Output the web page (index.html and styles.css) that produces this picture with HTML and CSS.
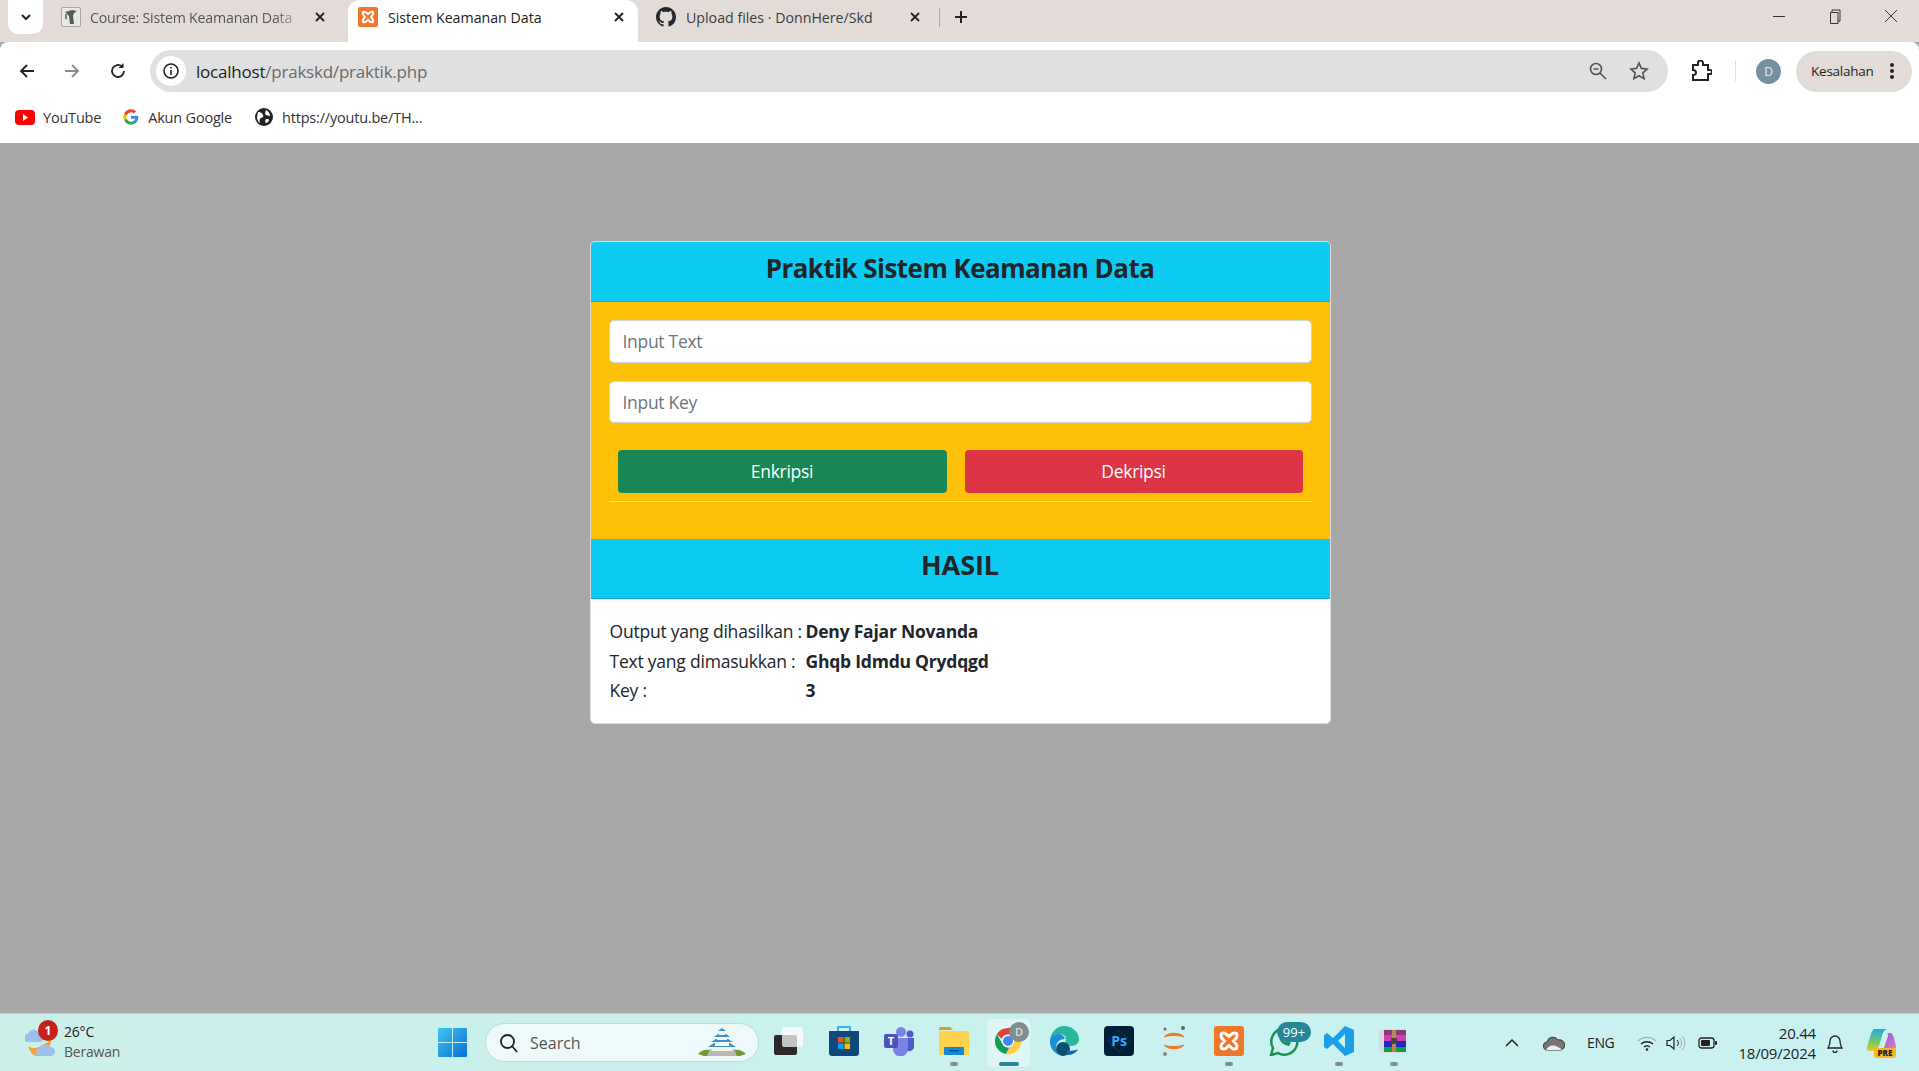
FILE: index.html
```html
<!DOCTYPE html>
<html lang="id">
<head>
<meta charset="utf-8">
<title>Sistem Keamanan Data</title>
<link rel="stylesheet" href="styles.css">
</head>
<body>
<div class="tabstrip">
  <button class="tabsearch"><svg width="14" height="14" viewBox="0 0 14 14"><path d="M3 5l4 4 4-4" fill="none" stroke="#222" stroke-width="2"/></svg></button>
  <div class="tab tab-1">
    <svg width="20" height="20" viewBox="0 0 20 20"><rect x=".5" y=".5" width="19" height="19" rx="1.500" fill="#e8e8e6" stroke="#a5a5a5"/><path d="M4 5l7-2 5 1-3 2-1 3 1 8H9L8 9 6 7z" fill="#5a5a5a"/><path d="M5 7v5" stroke="#5a5a5a" stroke-width="1.500"/></svg>
    <span class="tabtext tabtext-fade">Course: Sistem Keamanan Data</span>
    <svg class="tabclose" width="12" height="12" viewBox="0 0 12 12"><path d="M2 2l8 8M10 2l-8 8" stroke="#222" stroke-width="1.800"/></svg>
  </div>
  <div class="tab tab-active">
    <svg width="20" height="20" viewBox="0 0 20 20"><rect width="20" height="20" rx="2" fill="#f0762a"/><path d="M5 5c2-1 3 0 5 2 2-2 3-3 5-2 1 2 0 3-2 5 2 2 3 3 2 5-2 1-3 0-5-2-2 2-3 3-5 2-1-2 0-3 2-5-2-2-3-3-2-5z" fill="none" stroke="#fff" stroke-width="2"/></svg>
    <span class="tabtext">Sistem Keamanan Data</span>
    <svg class="tabclose" width="12" height="12" viewBox="0 0 12 12"><path d="M2 2l8 8M10 2l-8 8" stroke="#222" stroke-width="1.800"/></svg>
  </div>
  <div class="tab tab-3">
    <svg width="20" height="20" viewBox="0 0 16 16"><path fill="#24292f" d="M8 0C3.58 0 0 3.58 0 8c0 3.54 2.29 6.53 5.47 7.59.4.07.55-.17.55-.38 0-.19-.01-.82-.01-1.49-2.01.37-2.53-.49-2.69-.94-.09-.23-.48-.94-.82-1.13-.28-.15-.68-.52-.01-.53.63-.01 1.08.58 1.23.82.72 1.21 1.87.87 2.33.66.07-.52.28-.87.51-1.07-1.78-.2-3.64-.89-3.64-3.95 0-.87.31-1.59.82-2.15-.08-.2-.36-1.02.08-2.12 0 0 .67-.21 2.2.82.64-.18 1.32-.27 2-.27s1.36.09 2 .27c1.53-1.04 2.2-.82 2.2-.82.44 1.1.16 1.92.08 2.12.51.56.82 1.27.82 2.15 0 3.07-1.87 3.75-3.65 3.95.29.25.54.73.54 1.48 0 1.07-.01 1.93-.01 2.2 0 .21.15.46.55.38A8.01 8.01 0 0 0 16 8c0-4.42-3.58-8-8-8z"/></svg>
    <span class="tabtext">Upload files · DonnHere/Skd</span>
    <svg class="tabclose" width="12" height="12" viewBox="0 0 12 12"><path d="M2 2l8 8M10 2l-8 8" stroke="#222" stroke-width="1.800"/></svg>
  </div>
  <span class="tabdivider"></span>
  <svg class="tabplus" width="14" height="14" viewBox="0 0 14 14"><path d="M7 1v12M1 7h12" stroke="#222" stroke-width="2"/></svg>
  <div class="winbuttons">
    <svg width="14" height="14" viewBox="0 0 14 14"><path d="M1 7.500h12" stroke="#333"/></svg>
    <svg width="14" height="16" viewBox="0 0 14 16"><path d="M4 3V1h8v11h-2M2.500 3.500h7.500v11H2.500z" fill="none" stroke="#333"/></svg>
    <svg width="14" height="14" viewBox="0 0 14 14"><path d="M1 1l12 12M13 1L1 13" stroke="#333"/></svg>
  </div>
</div>

<div class="toolbar">
  <svg class="nav-back" width="18" height="18" viewBox="0 0 18 18"><path d="M16 9H3M9 3L3 9l6 6" fill="none" stroke="#222" stroke-width="1.800"/></svg>
  <svg class="nav-fwd" width="18" height="18" viewBox="0 0 18 18"><path d="M2 9h13M9 3l6 6-6 6" fill="none" stroke="#8a8a8a" stroke-width="1.800"/></svg>
  <svg class="nav-reload" width="18" height="18" viewBox="0 0 18 18"><path d="M15 9a6 6 0 1 1-2-4.500" fill="none" stroke="#222" stroke-width="1.800"/><path d="M14.500 1v5h-5z" fill="#222"/></svg>
  <div class="omnibox">
    <span class="siteinfo"><svg width="18" height="18" viewBox="0 0 18 18"><circle cx="9" cy="9" r="7" fill="none" stroke="#222" stroke-width="1.600"/><path d="M9 8v5M9 5v1.600" stroke="#222" stroke-width="1.600"/></svg></span>
    <span class="url"><span class="url-host">localhost</span>/prakskd/praktik.php</span>
    <svg class="omni-zoom" width="20" height="20" viewBox="0 0 20 20"><circle cx="8" cy="8" r="5.500" fill="none" stroke="#555" stroke-width="1.600"/><path d="M12 12l6 6M5.500 8h5" stroke="#555" stroke-width="1.600"/></svg>
    <svg class="omni-star" width="20" height="20" viewBox="0 0 20 20"><path d="M10 2l2.400 5.400 5.800.6-4.400 3.900 1.300 5.800L10 14.700l-5.100 3 1.300-5.800L1.800 8l5.800-.6z" fill="none" stroke="#555" stroke-width="1.600"/></svg>
  </div>
  <svg class="tool-ext" width="22" height="22" viewBox="0 0 22 22"><path d="M3 5h5V3a2 2 0 0 1 5 0v2h5v5h2a2 2 0 0 1 0 4h-2v6H3v-5c2 0 3-1 3-2.500S5 10 3 10z" fill="none" stroke="#222" stroke-width="2"/></svg>
  <span class="tool-divider"></span>
  <span class="avatar">D</span>
  <span class="errpill">Kesalahan<svg width="6" height="18" viewBox="0 0 6 18"><circle cx="3" cy="3" r="2" fill="#222"/><circle cx="3" cy="9" r="2" fill="#222"/><circle cx="3" cy="15" r="2" fill="#222"/></svg></span>
</div>

<div class="bookmarks">
  <span class="bm bm-1"><svg width="20" height="15" viewBox="0 0 20 15"><rect width="20" height="15" rx="4" fill="#f00"/><path d="M8 4l5 3.500L8 11z" fill="#fff"/></svg>YouTube</span>
  <span class="bm bm-2"><svg width="16" height="16" viewBox="0 0 48 48"><path fill="#4285F4" d="M46 24.500c0-1.600-.1-3.100-.4-4.500H24v9h12.400c-.5 2.800-2.100 5.200-4.600 6.800v5.700h7.400C43.500 36.500 46 31 46 24.500z"/><path fill="#34A853" d="M24 47c6.200 0 11.400-2 15.200-5.500l-7.400-5.700c-2 1.400-4.700 2.200-7.800 2.200-6 0-11-4-12.800-9.500H3.500v5.900C7.300 42 15 47 24 47z"/><path fill="#FBBC05" d="M11.200 28.500c-.5-1.400-.7-2.900-.7-4.500s.3-3.100.7-4.500v-5.900H3.500C2 16.700 1 20.200 1 24s.9 7.300 2.500 10.400z"/><path fill="#EA4335" d="M24 10c3.400 0 6.400 1.200 8.800 3.400l6.500-6.500C35.400 3.300 30.200 1 24 1 15 1 7.300 6 3.500 13.600l7.700 5.900C13 14 18 10 24 10z"/></svg>Akun Google</span>
  <span class="bm bm-3"><svg width="18" height="18" viewBox="0 0 18 18"><circle cx="9" cy="9" r="9" fill="#222"/><path d="M3 4c3 0 4 1 5 3s-1 3-2 3-2 2-1 5c-2-1-3-4-3-6zM11 2c2 1 4 3 4 6-2 0-3-1-4-1s-1-3 0-5zM11 11c2 0 3 0 3 1s-2 3-3 3-1-3 0-4z" fill="#fff"/></svg>https://youtu.be/TH...</span>
</div>

<main class="page">
  <section class="card">
    <h3 class="card-head">Praktik Sistem Keamanan Data</h3>
    <form class="card-form">
      <input class="field" type="text" placeholder="Input Text">
      <input class="field field-key" type="text" placeholder="Input Key">
      <div class="actions">
        <button type="button" class="btn btn-green">Enkripsi</button>
        <button type="button" class="btn btn-red">Dekripsi</button>
      </div>
      <hr class="rule">
    </form>
    <h3 class="card-head card-head-result">HASIL</h3>
    <div class="result">
      <span>Output yang dihasilkan :</span><b>Deny Fajar Novanda</b>
      <span>Text yang dimasukkan :</span><b>Ghqb Idmdu Qrydqgd</b>
      <span>Key :</span><b>3</b>
    </div>
  </section>
</main>

<footer class="taskbar">
  <div class="weather">
    <svg width="30" height="30" viewBox="0 0 30 30"><path d="M3 18c4 3 10 3 16-2 3-1 6-3 7-6 1 8-5 18-14 18-4 0-7-4-9-10z" fill="#f2a33a"/><path d="M2 14a4 4 0 0 1 1-8 6 6 0 0 1 11-1 4.500 4.500 0 0 1 1 9z" fill="#9dc0ea"/><path d="M15 28a4 4 0 0 1 0-8 5.500 5.500 0 0 1 10-1 4.500 4.500 0 0 1 1 9z" fill="#9dc0ea"/></svg>
    <span class="wbadge">1</span>
    <div class="wtext"><span>26°C</span><span class="wsub">Berawan</span></div>
  </div>
  <svg class="startbtn" width="29" height="29" viewBox="0 0 29 29"><defs><linearGradient id="win" x1="0" y1="0" x2="1" y2="1"><stop offset="0" stop-color="#3fc5f5"/><stop offset="1" stop-color="#0a6fd6"/></linearGradient></defs><path fill="url(#win)" d="M0 1a1 1 0 0 1 1-1h13v14H0zM15 0h13a1 1 0 0 1 1 1v13H15zM0 15h14v14H1a1 1 0 0 1-1-1zM15 15h14v13a1 1 0 0 1-1 1H15z"/></svg>
  <div class="searchbox">
    <svg width="20" height="20" viewBox="0 0 20 20"><circle cx="8.500" cy="8.500" r="6.500" fill="none" stroke="#222" stroke-width="1.800"/><path d="M13 13l5 6" stroke="#222" stroke-width="1.800"/></svg>
    <span class="searchtext">Search</span>
    <svg class="castle" width="48" height="29" viewBox="0 0 48 29"><path d="M0 26c3-4 8-5 12-4h24c5-1 9 1 12 4l-6 2H6z" fill="#6f9a3a"/><path d="M9 28l3-7h24l3 7z" fill="#b9b9b4"/><path d="M13 23h22l-2-5H15z" fill="#f3f3ee"/><path d="M10 19l6-4h16l6 4zM13 14l5-3h12l5 3zM16 9l4-3h8l4 3z" fill="#3f8fc9"/><path d="M17 15h14v3H17zM19 10h10v2H19zM21 5h6v2h-6z" fill="#f6f6f2"/><path d="M20 3l4-3 4 3z" fill="#3f8fc9"/></svg>
  </div>
  <div class="apps">
    <span class="app"><svg width="29" height="28" viewBox="0 0 29 28"><rect y="8" width="23" height="20" rx="2" fill="#2a2a2a"/><rect x="8" width="21" height="20" rx="2" fill="#fff" fill-opacity=".72"/></svg></span>
    <span class="app"><svg width="30" height="32" viewBox="0 0 30 32"><path d="M9 6V2h12v4" fill="none" stroke="#35b5e0" stroke-width="2"/><path d="M0 6h30v22a3 3 0 0 1-3 3H3a3 3 0 0 1-3-3z" fill="#12477e"/><rect x="9" y="12" width="5.500" height="5.500" fill="#f25022"/><rect x="15.500" y="12" width="5.500" height="5.500" fill="#7fba00"/><rect x="9" y="18.500" width="5.500" height="5.500" fill="#00a4ef"/><rect x="15.500" y="18.500" width="5.500" height="5.500" fill="#ffb900"/></svg></span>
    <span class="app"><svg width="30" height="30" viewBox="0 0 30 30"><circle cx="17" cy="6" r="5" fill="#7b83eb"/><circle cx="26" cy="8" r="3.500" fill="#5059c9"/><path d="M21 12h9v9a5 5 0 0 1-9 2z" fill="#5059c9"/><path d="M9 12h15v11a7.500 7.500 0 0 1-15 0z" fill="#7b83eb"/><rect y="8" width="14" height="14" rx="2" fill="#4b53bc"/><text class="teams-t" x="7" y="19" text-anchor="middle">T</text></svg></span>
    <span class="app app-run"><svg width="30" height="30" viewBox="0 0 30 30"><path d="M0 3a2 2 0 0 1 2-2h9l3 3h-14z" fill="#d9a21e"/><path d="M0 5h30v23a1 1 0 0 1-1 1H1a1 1 0 0 1-1-1z" fill="#ffd34e"/><rect x="5" y="21" width="20" height="8" rx="1" fill="#1486d6"/><rect x="10" y="24" width="10" height="1.500" fill="#0b4f8a"/></svg></span>
    <span class="app app-active"><svg width="30" height="30" viewBox="0 0 48 48"><path fill="#db4437" d="M24 3a21 21 0 0 1 18.200 10.500H24a10.500 10.500 0 0 0-10 7.300L6.100 13.200A21 21 0 0 1 24 3z"/><path fill="#0f9d58" d="M6.100 13.200L15 28.500A10.500 10.500 0 0 0 26.300 34.300L20.700 44.700A21 21 0 0 1 6.100 13.200z"/><path fill="#ffcd40" d="M42.200 13.500A21 21 0 0 1 20.700 44.700l9-15.700A10.500 10.500 0 0 0 31 13.500z"/><circle cx="24" cy="24" r="9" fill="#4285f4" stroke="#fff" stroke-width="2"/></svg><span class="chromebadge">D</span></span>
    <span class="app"><svg width="30" height="30" viewBox="0 0 30 30"><path d="M1 14C2 6 8 0 15 0c8 0 15 6 15 13 0 4-3 7-8 7-4 0-6-1-6-3 0-1 1-2 1-4 0-3-3-5-7-5-4 0-8 3-9 6z" fill="#28b8a0"/><path d="M1 14c1-4 5-6 9-6 3 0 5 2 6 5-5 0-9 3-9 9 0 3 1 5 3 7C5 27 0 21 1 14z" fill="#1b8fd6"/><circle cx="14" cy="23" r="7" fill="#0c4f70"/><path d="M18 29c5 0 9-2 11-6-3 2-8 2-11 1z" fill="#1565b8"/></svg></span>
    <span class="app"><svg width="30" height="30" viewBox="0 0 30 30"><rect width="30" height="30" rx="4" fill="#001e36"/><path d="M15 4l11 11-11 11L4 15z" fill="none" stroke="#0d3a5c"/><text class="ps-t" x="15" y="20" text-anchor="middle">Ps</text></svg></span>
    <span class="app"><svg width="30" height="34" viewBox="0 0 30 34"><path d="M5 13c4-5 16-5 20 0-4-2-16-2-20 0zM5 21c4 5 16 5 20 0-4 2-16 2-20 0z" fill="#f37726" stroke="#f37726"/><circle cx="24" cy="4" r="2" fill="#666"/><circle cx="6" cy="5" r="1.500" fill="#666"/><circle cx="6" cy="30" r="2" fill="#888"/></svg></span>
    <span class="app app-run"><svg width="30" height="32" viewBox="0 0 20 20"><rect width="20" height="20" rx="2" fill="#f0762a"/><path d="M5 5c2-1 3 0 5 2 2-2 3-3 5-2 1 2 0 3-2 5 2 2 3 3 2 5-2 1-3 0-5-2-2 2-3 3-5 2-1-2 0-3 2-5-2-2-3-3-2-5z" fill="none" stroke="#fff" stroke-width="2"/></svg></span>
    <span class="app"><svg width="30" height="30" viewBox="0 0 30 30"><path d="M2 29l2-7a13 13 0 1 1 5 5z" fill="none" stroke="#1a8f55" stroke-width="2.500"/><path d="M10 10c0 5 4 9 10 10l2-3-4-2-2 1c-1-1-2-2-3-4l1-2-2-3z" fill="#1a8f55"/></svg><span class="wabadge">99+</span></span>
    <span class="app app-run"><svg width="30" height="30" viewBox="0 0 30 30"><path d="M21 0l9 4v22l-9 4-12-12-6 5-3-2v-12l3-2 6 5zM21 8l-7 7 7 7z" fill="#1a9fe8"/></svg></span>
    <span class="app app-run app-rar"><svg width="28" height="24" viewBox="0 0 28 24"><path d="M1 2l4-2h21l2 2v20l-2 2H5l-4-2z" fill="#d8d8e0"/><rect x="6" y="1" width="22" height="5" fill="#8a3a7a"/><rect x="6" y="6" width="22" height="6" fill="#d23fb0"/><rect x="6" y="12" width="22" height="6" fill="#1c2bc8"/><rect x="6" y="18" width="22" height="5" fill="#12a03a"/><path d="M14 1h4v22h-4z" fill="#b98a4a"/><rect x="13" y="9" width="6" height="6" rx="1" fill="#444"/></svg></span>
  </div>
  <div class="tray">
    <svg class="tray-chev" width="16" height="16" viewBox="0 0 16 16"><path d="M2 11l6-6 6 6" fill="none" stroke="#222" stroke-width="1.500"/></svg>
    <svg class="tray-cloud" width="22" height="16" viewBox="0 0 22 16"><path d="M5 15a4 4 0 0 1-1-8 6 6 0 0 1 11-2 5 5 0 0 1 3 10z" fill="#777" stroke="#333"/><path d="M3 15c3-6 10-6 16 0z" fill="#eee"/></svg>
    <span class="tray-lang">ENG</span>
    <svg class="tray-wifi" width="20" height="16" viewBox="0 0 20 16"><path d="M1 6a13 13 0 0 1 18 0" fill="none" stroke="#aaa" stroke-width="1.200"/><path d="M4 9a9 9 0 0 1 12 0M7 12a4.500 4.500 0 0 1 6 0" fill="none" stroke="#222" stroke-width="1.400"/><circle cx="10" cy="14.500" r="1.300" fill="#222"/></svg>
    <svg class="tray-vol" width="20" height="16" viewBox="0 0 20 16"><path d="M1 5.500h3L8 2v12L4 10.500H1z" fill="none" stroke="#222" stroke-width="1.200"/><path d="M11 5a4 4 0 0 1 0 6" fill="none" stroke="#222"/><path d="M13.500 3a7 7 0 0 1 0 10M16 1a10 10 0 0 1 0 14" fill="none" stroke="#aaa"/></svg>
    <svg class="tray-bat" width="20" height="12" viewBox="0 0 20 12"><rect x="1" y="1" width="15" height="10" rx="2.500" fill="none" stroke="#222" stroke-width="1.300"/><rect x="3" y="3" width="9" height="6" rx="1" fill="#222"/><rect x="17" y="4" width="2" height="4" rx="1" fill="#222"/></svg>
    <div class="clock"><span>20.44</span><span>18/09/2024</span></div>
    <svg class="tray-bell" width="18" height="20" viewBox="0 0 18 20"><path d="M2 15c1-2 2-3 2-7a5 5 0 0 1 10 0c0 4 1 5 2 7zM7 17.500a2 2 0 0 0 4 0" fill="none" stroke="#222" stroke-width="1.300"/></svg>
    <span class="copilot"><svg width="30" height="22" viewBox="0 0 30 22"><defs><linearGradient id="cop1" x1="0" y1="0" x2="0" y2="1"><stop offset="0" stop-color="#1ea8ee"/><stop offset=".55" stop-color="#6cc86a"/><stop offset="1" stop-color="#e8c83a"/></linearGradient><linearGradient id="cop2" x1="0" y1="0" x2="1" y2="1"><stop offset="0" stop-color="#7a5cf0"/><stop offset="1" stop-color="#f07ab0"/></linearGradient></defs><path d="M9 0h12c-3 1-4 3-5 7l-3 10c-1 3-3 5-6 5H3c-2 0-3-2-2-4L5 5c1-3 2-5 4-5z" fill="url(#cop1)"/><path d="M21 4h3c2 0 3 2 4 5l2 8c0 3-2 5-4 5H14c3-1 4-3 5-6l3-9c0-1 0-2-1-3z" fill="url(#cop2)"/></svg><span class="prebadge">PRE</span></span>
  </div>
</footer>
</body>
</html>
```
FILE: styles.css
```css
* { box-sizing: border-box; }
html, body { margin: 0; height: 100%; overflow: hidden; }
body {
  display: flex;
  flex-direction: column;
  font-family: "Open Sans", "Noto Sans", sans-serif;
  color: #212529;
  background: #a8a8a8;
}
svg { display: block; flex: none; }

/* tab strip */
.tabstrip {
  height: 42px;
  flex: none;
  display: flex;
  align-items: stretch;
  background: #e3dbd8;
  padding-left: 8px;
  font-size: 14.200px;
}
.tabsearch {
  width: 35px;
  height: 34px;
  border: 0;
  border-radius: 0 0 10px 10px;
  background: #fff;
  display: flex;
  align-items: center;
  justify-content: center;
  padding: 0;
}
.tab {
  display: flex;
  align-items: center;
  height: 34px;
  color: #3c3c3c;
}
.tab-1 { width: 305px; padding-left: 18px; }
.tab-active {
  width: 290px;
  height: 42px;
  padding: 0 0 8px 10px;
  background: #fff;
  border-radius: 12px 12px 0 0;
  color: #222;
}
.tab-3 { width: 301px; padding-left: 18px; }
.tabtext { margin-left: 10px; white-space: nowrap; }
.tabtext-fade {
  width: 205px;
  margin-left: 9px;
  color: #555;
  letter-spacing: -.2px;
  -webkit-mask-image: linear-gradient(90deg, #000 90%, rgba(0,0,0,.35));
  mask-image: linear-gradient(90deg, #000 90%, rgba(0,0,0,.35));
}
.tab-1 .tabclose { margin-left: 19px; }
.tab-active .tabclose { margin-left: 71px; }
.tab-3 .tabclose { margin-left: 36px; }
.tabdivider { width: 1px; height: 19px; margin-top: 8px; background: #aaa; }
.tabplus { margin: 10px 0 0 14px; }
.winbuttons {
  margin-left: auto;
  display: flex;
  align-items: flex-start;
  gap: 42px;
  padding: 9px 21px 0 0;
}

/* toolbar */
.toolbar {
  height: 59px;
  flex: none;
  display: flex;
  align-items: center;
  background: #fff;
  padding: 0 7px 1px 18px;
  border-top-left-radius: 8px;
  border-top-right-radius: 8px;
}
.nav-fwd { margin-left: 27px; }
.nav-reload { margin-left: 28px; }
.omnibox {
  margin-left: 23px;
  width: 1519px;
  height: 42px;
  border-radius: 21px;
  background: #e0e0e0;
  display: flex;
  align-items: center;
  padding-left: 6px;
}
.siteinfo {
  width: 30px;
  height: 30px;
  border-radius: 50%;
  background: #fff;
  display: flex;
  align-items: center;
  justify-content: center;
}
.url { margin-left: 10px; font-size: 17px; color: #6a6a6a; white-space: nowrap; letter-spacing: -.22px; }
.url-host { color: #222; }
.omni-zoom { margin-left: auto; }
.omni-star { margin-left: 21px; margin-right: 19px; }
.tool-ext { margin-left: 22px; }
.tool-divider { width: 1px; height: 20px; background: #e3dbd8; margin-left: 23px; }
.avatar {
  width: 25px;
  height: 25px;
  margin-left: 20px;
  border-radius: 50%;
  background: #75909f;
  color: #e8eef2;
  font-size: 12px;
  display: flex;
  align-items: center;
  justify-content: center;
}
.errpill {
  margin-left: 15px;
  width: 116px;
  height: 41px;
  border-radius: 21px;
  background: #e3dbd8;
  font-size: 13.500px;
  letter-spacing: -.25px;
  color: #222;
  display: flex;
  align-items: center;
  padding-left: 15px;
  gap: 15px;
}

/* bookmarks */
.bookmarks {
  height: 42px;
  flex: none;
  display: flex;
  align-items: flex-start;
  padding: 6px 0 0 15px;
  background: #fff;
  font-size: 14.500px;
  color: #333;
}
.bm { display: flex; align-items: center; height: 20px; white-space: nowrap; letter-spacing: -.2px; }
.bm-1 { gap: 8px; }
.bm-2 { margin-left: 22px; gap: 9px; }
.bm-3 { margin-left: 23px; gap: 9px; }

/* page */
.page {
  flex: 1;
  min-height: 0;
  display: flex;
  justify-content: center;
  align-items: flex-start;
  padding-top: 98px;
  padding-left: 1px;
  background: #a8a8a8;
}
.card {
  width: 741px;
  height: 483px;
  border: 1px solid #dcdcdc;
  border-radius: 5px;
  background: #fff;
  overflow: hidden;
}
.card-head {
  margin: 0;
  height: 60px;
  padding-top: 8px;
  background: #0dcaf0;
  border-bottom: 1px solid rgba(0,0,0,.125);
  text-align: center;
  font-size: 25.900px;
  font-weight: 700;
  line-height: 36px;
  letter-spacing: -.5px;
  color: #212529;
}
.card-head-result { font-size: 27px; letter-spacing: -.1px; }
.card-form {
  height: 237px;
  background: #ffc107;
  padding: 18px 18px 0;
  display: flex;
  flex-direction: column;
}
.field {
  height: 43px;
  flex: none;
  width: 100%;
  border: 1px solid #ced4da;
  border-radius: 5px;
  background: #fff;
  padding: 0 13px 2px;
  font: 17.500px "Open Sans", sans-serif;
  letter-spacing: -.3px;
  color: #212529;
}
.field::placeholder { color: #6c757d; opacity: 1; }
.field-key { margin-top: 18px; height: 42px; padding-bottom: 0; }
.actions {
  display: grid;
  grid-template-columns: 329px 338px;
  gap: 18px;
  margin: 27px 0 0 9px;
}
.btn {
  height: 43px;
  border: 0;
  border-radius: 4px;
  color: #fff;
  font: 17.500px "Open Sans", sans-serif;
  letter-spacing: -.3px;
  padding: 0 0 2px;
}
.btn-green { background: #198754; }
.btn-red { background: #dc3545; }
.rule { width: 100%; height: 1px; margin: 8px 0 0; border: 0; background: #e6e0cc; }
.result {
  display: grid;
  grid-template-columns: 196px 1fr;
  padding: 17.500px 18px 0 19px;
  grid-auto-rows: 29.500px;
  align-items: center;
  font-size: 17.500px;
  letter-spacing: -.22px;
}
.result span { white-space: nowrap; }

/* taskbar */
.taskbar {
  height: 58px;
  flex: none;
  display: flex;
  align-items: center;
  padding-left: 25px;
  background: linear-gradient(90deg, #ccefe9 0%, #c9f1ee 40%, #c9f1f2 100%);
  border-top: 1px solid #b5cfcd;
}
.weather { width: 413px; display: flex; align-items: center; gap: 9px; position: relative; }
.wbadge {
  position: absolute;
  left: 13px;
  top: -4px;
  width: 20px;
  height: 21px;
  border-radius: 50%;
  background: #c4231c;
  color: #fff;
  font-size: 12px;
  font-weight: 700;
  text-align: center;
  line-height: 21px;
}
.wtext { display: flex; flex-direction: column; margin-top: -2px; font-size: 14px; line-height: 20px; letter-spacing: -.2px; color: #1c1c1c; }
.wsub { color: #555; }
.searchbox {
  margin-left: 18px;
  width: 274px;
  height: 39px;
  flex: none;
  border-radius: 20px;
  background: #eefafa;
  border: 1px solid #bcdcda;
  display: flex;
  align-items: center;
  padding-left: 13px;
}
.searchtext { margin-left: 11px; font-size: 16px; color: #555; }
.castle { margin-left: auto; margin-right: 12px; }
.apps { display: flex; margin-left: 2px; }
.app {
  position: relative;
  width: 55px;
  height: 48px;
  display: flex;
  align-items: center;
  justify-content: center;
  padding-bottom: 4px;
}
.app-rar { padding-right: 4px; }
.app-run::after {
  content: "";
  position: absolute;
  left: 24px;
  bottom: 1px;
  width: 8px;
  height: 4px;
  border-radius: 2px;
  background: #7d8f90;
}
.app-active { background: rgba(255,255,255,.4); border-radius: 5px; margin: 0 6px; width: 43px; padding-right: 2px; }
.app-active::after {
  content: "";
  position: absolute;
  left: 12px;
  bottom: 1px;
  width: 20px;
  height: 4px;
  border-radius: 2px;
  background: #26879a;
}
.chromebadge {
  position: absolute;
  right: 1px;
  top: 3px;
  width: 20px;
  height: 20px;
  border-radius: 50%;
  background: #7d8f90;
  color: #ddd;
  font-size: 11px;
  font-weight: 600;
  text-align: center;
  line-height: 20px;
}
.wabadge {
  position: absolute;
  left: 21px;
  top: 3px;
  width: 34px;
  height: 20px;
  border-radius: 10px;
  background: #26879a;
  color: #fff;
  font-size: 13px;
  text-align: center;
  line-height: 20px;
}
.teams-t { font: 700 11px "Open Sans", sans-serif; fill: #fff; }
.ps-t { font: 700 14px "Open Sans", sans-serif; fill: #31a8ff; }
.tray { display: flex; align-items: center; margin-left: 83px; }
.tray-cloud { margin-left: 23px; }
.tray-lang { margin-left: 22px; width: 34px; font-size: 14px; letter-spacing: -.4px; color: #222; white-space: nowrap; }
.tray-wifi { margin-left: 16px; }
.tray-vol { margin-left: 9px; }
.tray-bat { margin-left: 12px; }
.clock {
  width: 98px;
  display: flex;
  flex-direction: column;
  align-items: flex-end;
  font-size: 15px;
  line-height: 20px;
  letter-spacing: -.2px;
  color: #222;
  white-space: nowrap;
}
.tray-bell { margin-left: 10px; }
.copilot { position: relative; display: block; margin: -6px 0 0 22px; }
.prebadge {
  position: absolute;
  left: 8px;
  top: 19px;
  width: 22px;
  height: 10px;
  border-radius: 3px;
  background: #f6b81e;
  color: #222;
  font-size: 8px;
  font-weight: 800;
  line-height: 10px;
  text-align: center;
}
```
